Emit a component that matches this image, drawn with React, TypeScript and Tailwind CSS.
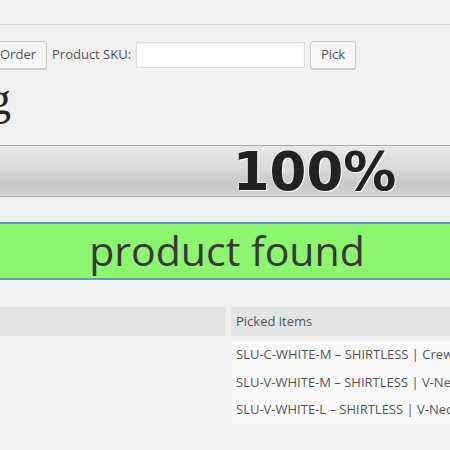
import { useState } from 'react'

const items = [
  'SLU-C-WHITE-M – SHIRTLESS | Crew Neck T-Shirt',
  'SLU-V-WHITE-M – SHIRTLESS | V-Neck T-Shirt',
  'SLU-V-WHITE-L – SHIRTLESS | V-Neck T-Shirt',
]

const App = () => {
  const [sku, setSku] = useState('')

  return (
    <div className="h-[450px] w-[450px] overflow-hidden bg-[#f1f1f1] font-['Open_Sans',sans-serif] text-[13px] text-[#444]">
      <div className="h-[24px]" />
      <div className="border-t border-[#d4d4d4]" />

      <div className="mt-[16px] flex h-[28px] items-center">
        <button className="-ml-[11px] h-[28px] rounded-[3px] border border-[#ccc] bg-[#f7f7f7] px-[10px] text-[#555] shadow-[0_1px_0_#ccc]">
          Order
        </button>
        <span className="ml-[5px] text-[#555]">Product SKU:</span>
        <input
          className="ml-[5px] h-[26px] w-[169px] border border-[#ddd] bg-white px-1 shadow-[inset_0_1px_2px_rgba(0,0,0,0.07)] outline-none"
          value={sku}
          onChange={(e) => setSku(e.target.value)}
        />
        <button className="ml-[5px] h-[28px] w-[46px] rounded-[3px] border border-[#ccc] bg-[#f7f7f7] text-[#555] shadow-[0_1px_0_#ccc]">
          Pick
        </button>
      </div>

      <div className="mt-[6px] flex h-[48px] w-[11px] justify-end whitespace-nowrap font-['Liberation_Serif',serif] text-[46px] leading-[48px] text-[#222]">
        Picking
      </div>

      <div className="mt-[22px] flex h-[52px] items-center justify-center border-y border-[#a9a9a9] bg-[linear-gradient(#e8e8e8,#d9d9d9_45%,#c9c9c9_75%,#d2d2d2)] pl-[179px] font-['DejaVu_Sans',sans-serif] text-[53px] leading-none font-bold text-[#222] [text-shadow:1px_1px_0_#fff,-1px_-1px_0_#eee]">
        100%
      </div>

      <div className="mt-[25px] flex h-[58px] items-center justify-center border-y-2 border-[#6797bf] bg-[#8cf66e] pl-[4px] pb-[1px] text-[41px] text-[#383838]">
        product found
      </div>

      <div className="mt-[27px] flex h-[29px]">
        <div className="w-[226px] bg-[#e4e4e4]" />
        <div className="ml-[5px] flex flex-1 items-center bg-[#e4e4e4] pl-[5px] text-[#555]">Picked items</div>
      </div>

      <div className="mt-[5px] ml-[232px] flex h-[83px] flex-col justify-center bg-[#f9f9f9] text-[#555]">
        {items.map((item) => (
          <div key={item} className="flex h-[27.5px] items-center whitespace-nowrap pl-[4px]">
            {item}
          </div>
        ))}
      </div>
    </div>
  )
}

export default App
